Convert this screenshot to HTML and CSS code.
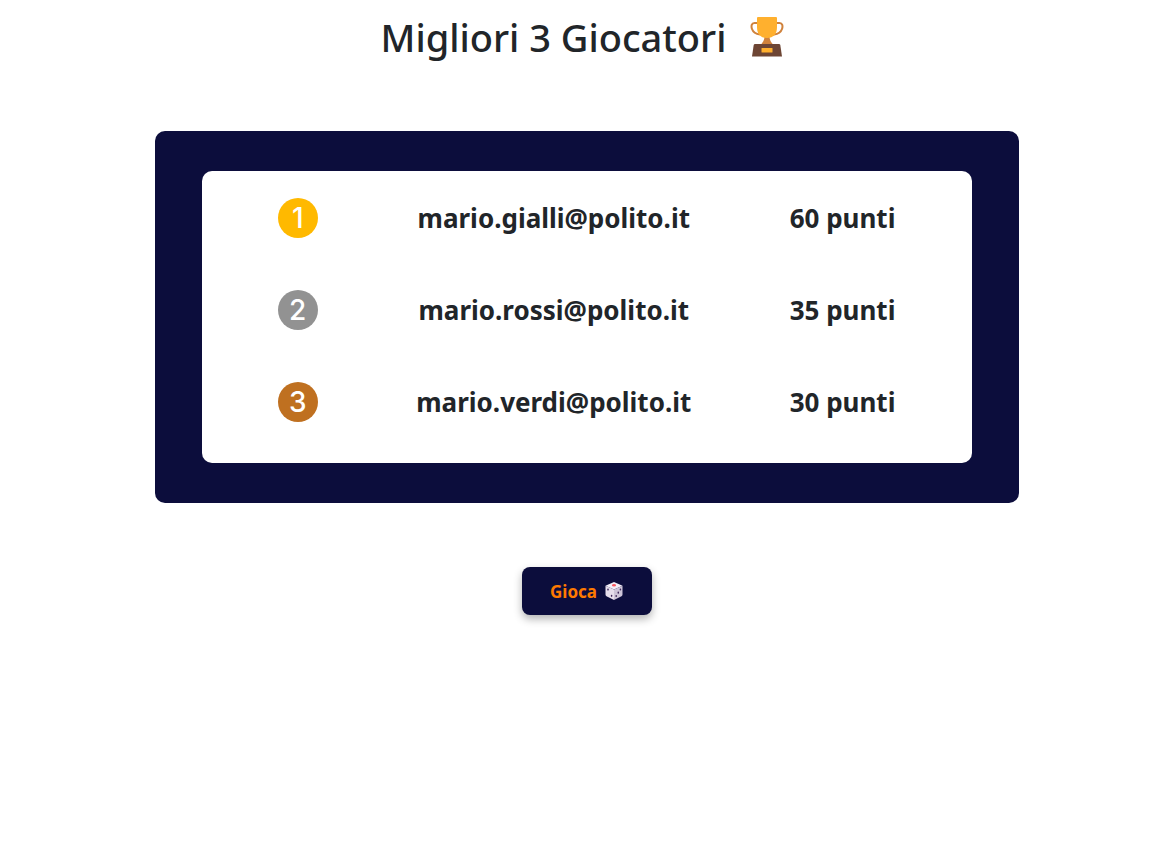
FILE: index.html
```html
<!DOCTYPE html>
<html lang="it">
<head>
<meta charset="utf-8">
<meta name="viewport" content="width=device-width, initial-scale=1">
<title>Migliori 3 Giocatori</title>
<link rel="stylesheet" href="styles.css">
</head>
<body>
<main class="page">
  <h1 class="title">
    <span>Migliori 3 Giocatori</span>
    <svg class="trophy" viewBox="0 0 34 40" aria-hidden="true">
      <path d="M8 6H4.500C1.500 6 1 9 2 12c1.200 3.500 4 5 8 5.500M26 6h3.500c3 0 3.500 3 2.500 6-1.200 3.500-4 5-8 5.500" fill="none" stroke="#d0823c" stroke-width="2"/>
      <path d="M14.500 19h5c0 4 1.500 6.500 4 9h-13c2.500-2.500 4-5 4-9z" fill="#d0823c"/>
      <path d="M8 0h18q1 0 1 1v9c0 7-3.500 11-10 11S7 17 7 10V1q0-1 1-1z" fill="#ffb02e"/>
      <path d="M5 27h24q1 0 1.300 1L32 39.500H2L3.700 28Q4 27 5 27z" fill="#6d4534"/>
      <rect x="11.500" y="31" width="11" height="4.500" rx="0.500" fill="#ffb02e"/>
    </svg>
  </h1>
  <section class="board">
    <div class="sheet">
      <table class="ranking">
        <colgroup><col class="col-rank"><col class="col-player"><col class="col-score"></colgroup>
        <tbody>
          <tr><td><span class="medal gold">1</span></td><td>mario.gialli@polito.it</td><td>60 punti</td></tr>
          <tr><td><span class="medal silver">2</span></td><td>mario.rossi@polito.it</td><td>35 punti</td></tr>
          <tr><td><span class="medal bronze">3</span></td><td>mario.verdi@polito.it</td><td>30 punti</td></tr>
        </tbody>
      </table>
    </div>
  </section>
  <button class="play" type="button">
    <span>Gioca</span>
    <svg class="die" viewBox="0 0 18 18" aria-hidden="true">
      <path d="M9 0l8.500 3.800L9 7.500.5 3.800z" fill="#f3eef8"/>
      <path d="M.5 3.800L9 7.500V18L1.500 14.200Q.5 13.700.5 12.500z" fill="#e6deec"/>
      <path d="M17.500 3.800L9 7.500V18l7.500-3.800q1-.5 1-1.700z" fill="#cdc4d8"/>
      <ellipse cx="9" cy="3.200" rx="2" ry="1.200" fill="#f8575f"/>
      <g fill="#402a5c">
        <ellipse cx="3" cy="7.600" rx=".8" ry="1.100"/><ellipse cx="6.600" cy="13.800" rx=".8" ry="1.100"/>
        <ellipse cx="15.400" cy="7.500" rx=".8" ry="1.100"/><ellipse cx="13.300" cy="10.700" rx=".8" ry="1.100"/><ellipse cx="11.200" cy="14" rx=".8" ry="1.100"/>
      </g>
    </svg>
  </button>
</main>
</body>
</html>
```
FILE: styles.css
```css
* { box-sizing: border-box; }
body {
  margin: 0;
  background: #fff;
  color: #212529;
  font-family: "Segoe UI", "Noto Sans", "Open Sans", sans-serif;
}
.page {
  display: flex;
  flex-direction: column;
  align-items: center;
  padding: 13px 16px 32px;
}
.title {
  display: flex;
  align-items: center;
  gap: 24px;
  margin: 0 0 70px;
  padding-right: 8px;
  font-size: 38px;
  line-height: 48px;
  font-weight: 500;
}
.trophy { width: 34px; height: 40px; }
.board {
  width: 100%;
  max-width: 864px;
  padding: 40px 47px;
  border-radius: 10px;
  background: #0c0d3c;
}
.sheet {
  padding: 1px 0 15px;
  border-radius: 10px;
  background: #fff;
}
.ranking {
  width: 100%;
  table-layout: fixed;
  border-collapse: collapse;
  text-align: center;
  font-size: 26px;
  line-height: 36px;
  font-weight: 700;
}
.ranking td { height: 92px; padding: 0; vertical-align: middle; }
.col-rank { width: 25%; }
.col-player { width: 41.5%; }
.col-score { width: 33.5%; }
.medal {
  display: flex;
  align-items: center;
  justify-content: center;
  width: 40px;
  height: 40px;
  margin: 0 auto;
  border-radius: 50%;
  color: #fff;
  font-family: Inter, Roboto, sans-serif;
  font-size: 28px;
  font-weight: 500;
}
.gold { background: #ffb900; }
.silver { background: #929292; }
.bronze { background: #bf7020; }
.play {
  display: flex;
  align-items: center;
  justify-content: center;
  gap: 8px;
  min-width: 130px;
  height: 48px;
  margin-top: 64px;
  padding: 0 24px;
  border: 0;
  border-radius: 8px;
  background: #0c0d3c;
  box-shadow: 0 4px 8px rgba(0, 0, 0, 0.3);
  color: #ff7900;
  font-family: inherit;
  font-size: 17px;
  font-weight: 700;
  cursor: pointer;
}
.die { width: 18px; height: 18px; }
```
